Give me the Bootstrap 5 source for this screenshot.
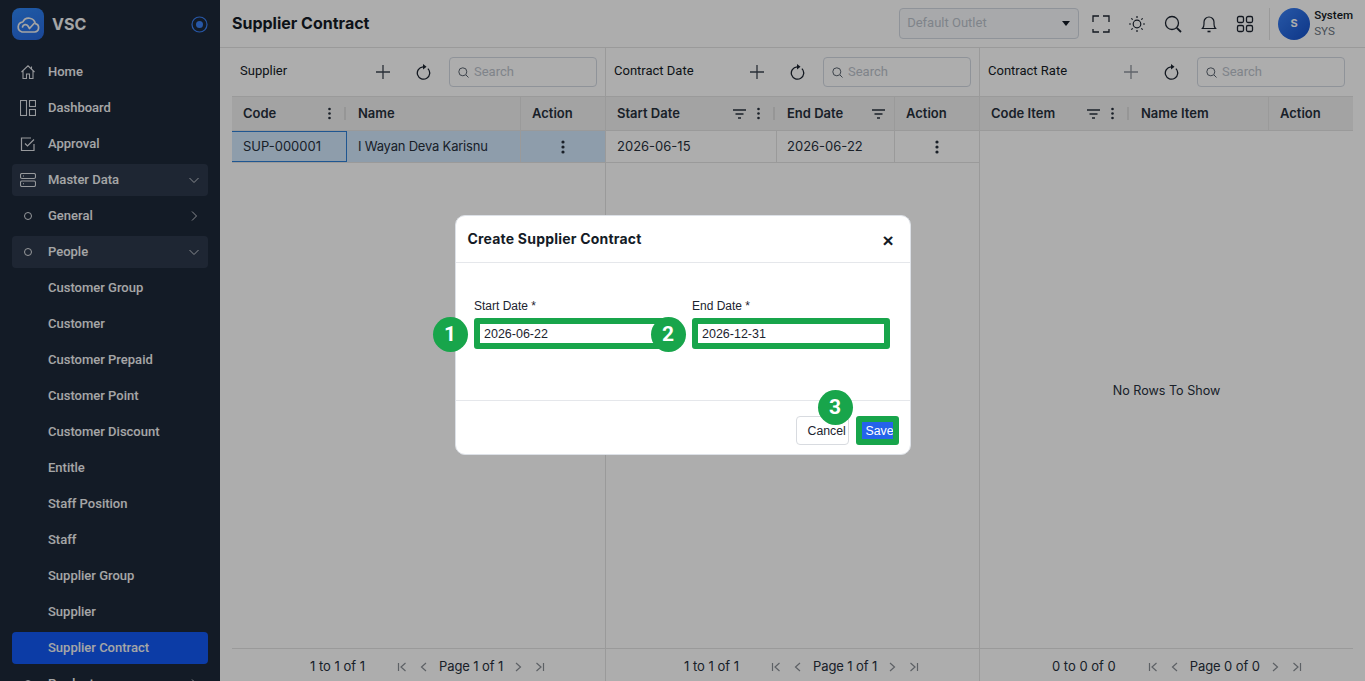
<!DOCTYPE html>
<html lang="en">
<head>
    <meta charset="UTF-8">
    <title>Supplier Contract</title>
    <link href="https://cdn.jsdelivr.net/npm/bootstrap@5.3.3/dist/css/bootstrap.min.css" rel="stylesheet">
    <style>
        html, body { height: 100%; }
        body { font-family: Inter, "Liberation Sans", sans-serif; font-size: 13px; color: #1c2430; overflow: hidden; background: #fff; }
        .app-shell { height: 681px; }

        .side-bar { width: 220px; flex: none; background: #1d2839; color: #f4f5f6; overflow: hidden; font-family: Roboto, sans-serif; }
        .brand-row { height: 48px; padding: 8px 12px; gap: 8px; }
        .brand-logo { width: 32px; height: 32px; border-radius: 8px; background: linear-gradient(160deg, #2f86f5, #2768de); }
        .brand-name { font-family: Inter, sans-serif; font-weight: 700; font-size: 16px; color: #f4f5f6; }
        .side-nav { padding: 8px 12px 0; gap: 4px; flex-wrap: nowrap; }
        .side-link { height: 32px; flex: none; border-radius: 4px; padding: 0 8px; color: #f4f5f6; font-size: 13px; font-weight: 500; display: flex; align-items: center; gap: 12px; }
        .side-link:hover { color: #f4f5f6; }
        .side-link.is-open { background: #2d394c; }
        .side-link.is-current { background: #1259f5; }
        .side-icon { width: 16px; flex: none; display: flex; justify-content: center; }
        .side-sub { padding-left: 36px; }
        .side-dot { width: 8px; height: 8px; border: 1px solid #dfe2e6; border-radius: 50%; }
        .side-caret { margin-left: auto; }

        .top-bar { height: 48px; flex: none; border-bottom: 1px solid #e4e4e4; padding: 0 12px; }
        .page-title { font-size: 16px; font-weight: 700; color: #141b26; margin: 0; }
        .outlet-select { width: 180px; height: 31px; font-family: Roboto, sans-serif; font-size: 13px; padding: 0 8px 2px 7px; border: 1px solid #d3d9e2; border-radius: 4px; color: #bcc3cc; background-image: url("data:image/svg+xml,%3Csvg xmlns='http://www.w3.org/2000/svg' viewBox='0 0 8 5'%3E%3Cpath d='M0 0h8L4 5z' fill='%23141b26'/%3E%3C/svg%3E"); background-size: 8px 5px; background-position: right 8px center; }
        .outlet-select:disabled { background-color: #f8fafc; }
        .top-tool { width: 36px; display: flex; justify-content: center; }
        .user-box { border-left: 1px solid #e4e4e4; margin-left: 6px; padding-left: 8px; height: 32px; gap: 4px; }
        .user-face { width: 32px; height: 32px; border-radius: 50%; background: linear-gradient(135deg, #3b82f6, #1450c8); color: #fff; font-size: 11px; font-weight: 700; }
        .user-text { margin-top: -1px; }
        .user-name { font-family: Roboto, sans-serif; font-size: 11.6px; font-weight: 500; line-height: 16px; color: #141b26; }
        .user-code { font-family: Roboto, sans-serif; font-size: 11.6px; line-height: 16px; color: #6b7480; }

        .panel-row { padding: 0 12px; min-height: 0; }
        .data-panel { width: 374px; flex: none; border-right: 1px solid #e4e4e4; }
        .data-panel:last-child { border-right: 0; width: 373px; }
        .panel-tools { height: 48px; flex: none; padding: 0 8px; font-family: Roboto, sans-serif; font-size: 13px; font-weight: 400; color: #141b26; }
        .tool-title { width: 122px; flex: none; margin-top: -2px; }
        .tool-btn { width: 41px; flex: none; display: flex; justify-content: center; }
        .search-box { width: 148px; flex: none; height: 30px; margin-left: 5px; border: 1px solid #d3d9e2; border-radius: 4px; padding: 0 8px; gap: 5px; color: #bcc3cc; font-size: 13px; }
        .grid-head { height: 35px; flex: none; background: #f1f1f1; border-top: 1px solid #e4e4e4; border-bottom: 1px solid #e4e4e4; font-weight: 600; font-size: 13px; color: #27303c; }
        .grid-body-row { height: 32px; flex: none; border-bottom: 1px solid #e4e4e4; color: #27303c; font-size: 13px; }
        .grid-cell { padding: 0 11px; display: flex; align-items: center; height: 100%; flex: none; border-left: 1px solid #e4e4e4; }
        .grid-cell:first-child { border-left: 0; }
        .grid-body-row .grid-cell + .grid-cell:not(.head-plain) { padding-left: 10px; }
        .head-plain { border-left: 0; }
        .row-picked { background: #d1e7fc; }
        .cell-picked { border: 1px solid #2f7fd6; }
        .name-text { letter-spacing: -.2px; }
        .cell-tail { margin-left: auto; display: flex; align-items: center; gap: 11px; }
        .tail-end { margin-right: -2px; }
        .resize-tick { width: 2px; height: 13px; background: #dddddd; margin-left: 2px; margin-right: -10px; }
        .grid-empty { color: #27303c; font-size: 12.6px; font-weight: 400; padding-top: 3px; }
        .panel-foot { height: 33px; flex: none; border-top: 1px solid #e4e4e4; padding: 3px 0 0 78px; font-size: 13px; color: #27303c; }
        .panel-foot-short { padding-left: 72px; }
        .foot-count { margin-right: 26px; }
        .foot-page { margin: 0 4px; letter-spacing: -.1px; }
        .foot-btn { width: 22px; display: flex; justify-content: center; }

        .dim-layer { position: absolute; inset: 0; background: rgba(0, 0, 0, .32); padding-top: 215px; }
        .dialog-box { width: 456px; height: 240px; border-radius: 10px; border: 1px solid #dde1e7; background: #fff; font-family: "Liberation Sans", sans-serif; color: #1c2430; }
        .dialog-head { height: 47px; padding: 0 13px 0 12px; border-bottom: 1px solid #e5e7eb; }
        .dialog-title { font-family: Inter, sans-serif; font-size: 14px; font-weight: 700; color: #141b26; margin: 0; letter-spacing: .2px; }
        .dialog-close { font-size: 19px; line-height: 1; font-weight: 700; color: #141b26; margin-right: 3px; margin-top: 2px; }
        .dialog-body { height: 137px; padding: 35px 20px 0 18.5px; }
        .field-grid { display: grid; grid-template-columns: 198px 198px; gap: 20px; }
        .field-label { font-size: 12px; line-height: 16px; margin-bottom: 4px; display: block; }
        .field-input { height: 31px; border: 6px solid #18a54b; border-radius: 3px; padding: 0 4px; font-size: 12.5px; color: #1c2430; font-family: "Liberation Sans", sans-serif; }
        .dialog-foot { height: 54px; border-top: 1px solid #e5e7eb; padding: 15px 11px 0 0; gap: 7px; align-items: flex-start; justify-content: flex-end; display: flex; }
        .btn-dismiss { width: 53px; height: 29px; padding: 1px 0 0 11px; border: 1px solid #d8dbe0; border-radius: 4px; background: #fff; font-size: 12.3px; color: #1c2430; text-align: left; white-space: nowrap; }
        .btn-keep { width: 43px; height: 29px; padding: 0 0 0 4px; border: 6px solid #18a54b; border-radius: 3px; background: #2563eb; color: #fff; font-size: 12.3px; line-height: 16px; overflow: hidden; text-align: left; white-space: nowrap; }
        .step-mark { position: absolute; width: 35px; height: 35px; border-radius: 50%; background: #18a54b; color: #fff; font-family: Roboto, sans-serif; font-weight: 700; font-size: 21px; display: flex; align-items: center; justify-content: center; }
        .step-a { left: -23px; top: 101px; }
        .step-b { left: 195px; top: 101px; }
        .step-c { left: 362px; top: 174px; }
    </style>
</head>
<body>
<div class="app-shell d-flex">
    <aside class="side-bar d-flex flex-column">
        <div class="brand-row d-flex align-items-center">
            <span class="brand-logo d-flex align-items-center justify-content-center">
                <svg width="24" height="17" viewBox="0 0 24 17" fill="none" stroke="#f2f2f2" stroke-width="1.700" stroke-linecap="round" stroke-linejoin="round"><path d="M6 16h12.500a4.200 4.200 0 0 0 .8-8.300A6.600 6.600 0 0 0 6.800 6 5.100 5.100 0 0 0 6 16z"/><path d="M6.500 11a3 3 0 0 1 5.500-1l1.500 2.500L18 7.500"/></svg>
            </span>
            <span class="brand-name">VSC</span>
            <svg class="ms-auto" width="17" height="17" viewBox="0 0 17 17"><circle cx="8.500" cy="8.500" r="7.500" fill="none" stroke="#3b82f6" stroke-width="1.200"/><circle cx="8.500" cy="8.500" r="3.500" fill="#3b82f6"/></svg>
        </div>
        <nav class="nav flex-column side-nav">
            <a class="nav-link side-link" href="#"><span class="side-icon"><svg width="16" height="16" viewBox="0 0 16 16" fill="none" stroke="#dfe2e6" stroke-width="1.100"><path d="M1.500 8 8 1.800 14.500 8M3 6.700V14.500h3.500V10h3v4.500H13V6.700M11.500 2.500v2.800"/></svg></span>Home</a>
            <a class="nav-link side-link" href="#"><span class="side-icon"><svg width="16" height="16" viewBox="0 0 16 16" fill="none" stroke="#dfe2e6" stroke-width="1.100"><rect x=".5" y=".5" width="6" height="15"/><rect x="9.500" y=".5" width="6" height="6"/><rect x="9.500" y="9.500" width="6" height="6"/></svg></span>Dashboard</a>
            <a class="nav-link side-link" href="#"><span class="side-icon"><svg width="16" height="16" viewBox="0 0 16 16" fill="none" stroke="#dfe2e6" stroke-width="1.200"><path d="M14 8v6.500H1.500V2H11"/><path d="m5 7.500 2.500 2.500L14 3.500"/></svg></span>Approval</a>
            <a class="nav-link side-link is-open" href="#"><span class="side-icon"><svg width="16" height="14" viewBox="0 0 16 14" fill="none" stroke="#dfe2e6" stroke-width="1.100"><rect x=".5" y=".5" width="15" height="5" rx="1.500"/><rect x=".5" y="8" width="15" height="5.500" rx="1.500"/><path d="M3 3h1M3 10.800h1"/></svg></span>Master Data<svg class="side-caret" width="12" height="12" viewBox="0 0 12 12" fill="none" stroke="#c8ccd2"><path d="m1.500 4 4.500 4.500L10.500 4"/></svg></a>
            <a class="nav-link side-link" href="#"><span class="side-icon"><span class="side-dot"></span></span>General<svg class="side-caret" width="12" height="12" viewBox="0 0 12 12" fill="none" stroke="#c8ccd2"><path d="m4 1.500 4.500 4.500L4 10.500"/></svg></a>
            <a class="nav-link side-link is-open" href="#"><span class="side-icon"><span class="side-dot"></span></span>People<svg class="side-caret" width="12" height="12" viewBox="0 0 12 12" fill="none" stroke="#c8ccd2"><path d="m1.500 4 4.500 4.500L10.500 4"/></svg></a>
            <a class="nav-link side-link side-sub" href="#">Customer Group</a>
            <a class="nav-link side-link side-sub" href="#">Customer</a>
            <a class="nav-link side-link side-sub" href="#">Customer Prepaid</a>
            <a class="nav-link side-link side-sub" href="#">Customer Point</a>
            <a class="nav-link side-link side-sub" href="#">Customer Discount</a>
            <a class="nav-link side-link side-sub" href="#">Entitle</a>
            <a class="nav-link side-link side-sub" href="#">Staff Position</a>
            <a class="nav-link side-link side-sub" href="#">Staff</a>
            <a class="nav-link side-link side-sub" href="#">Supplier Group</a>
            <a class="nav-link side-link side-sub" href="#">Supplier</a>
            <a class="nav-link side-link side-sub is-current" href="#">Supplier Contract</a>
            <a class="nav-link side-link" href="#"><span class="side-icon"><span class="side-dot"></span></span>Product<svg class="side-caret" width="12" height="12" viewBox="0 0 12 12" fill="none" stroke="#c8ccd2"><path d="m4 1.500 4.500 4.500L4 10.500"/></svg></a>
        </nav>
    </aside>

    <main class="flex-grow-1 d-flex flex-column" style="min-width:0">
        <header class="top-bar d-flex align-items-center">
            <h1 class="page-title">Supplier Contract</h1>
            <select class="form-select outlet-select ms-auto" disabled><option>Default Outlet</option></select>
            <span class="top-tool ms-1"><svg width="18" height="18" viewBox="0 0 18 18" fill="none" stroke="#1c2430" stroke-width="1.300"><path d="M1 7V1h6M11 1h6v6M1 14v3h6M17 14v3h-6"/></svg></span>
            <span class="top-tool"><svg width="18" height="18" viewBox="0 0 18 18" fill="none" stroke="#1c2430" stroke-width="1.200"><circle cx="9" cy="9" r="3.800"/><path d="M9 1v2M9 15v2M1 9h2M15 9h2M3.300 3.300l1.400 1.400M13.300 13.300l1.400 1.400M3.300 14.700l1.400-1.400M13.300 4.700l1.400-1.400"/></svg></span>
            <span class="top-tool"><svg width="18" height="18" viewBox="0 0 18 18" fill="none" stroke="#1c2430" stroke-width="1.300"><circle cx="8" cy="8" r="6.500"/><path d="m12.800 12.800 4.200 4.200" stroke-width="1.800"/></svg></span>
            <span class="top-tool"><svg width="16" height="18" viewBox="0 0 16 18" fill="none" stroke="#1c2430" stroke-width="1.200"><path d="M1.500 13.500c1-1 1.500-2 1.500-4.500V7a5 5 0 0 1 10 0v2c0 2.500.5 3.500 1.500 4.500z"/><path d="M6.500 16.500h3" stroke-width="1.600"/></svg></span>
            <span class="top-tool"><svg width="18" height="18" viewBox="0 0 18 18" fill="none" stroke="#1c2430" stroke-width="1.300"><rect x="1.500" y="1.500" width="6" height="6" rx="1.500"/><rect x="10.500" y="1.500" width="6" height="6" rx="1.500"/><rect x="1.500" y="10.500" width="6" height="6" rx="1.500"/><rect x="10.500" y="10.500" width="6" height="6" rx="1.500"/></svg></span>
            <div class="user-box d-flex align-items-center">
                <span class="user-face d-flex align-items-center justify-content-center">S</span>
                <div class="user-text"><div class="user-name">System</div><div class="user-code">SYS</div></div>
            </div>
        </header>

        <div class="panel-row d-flex flex-grow-1">
            <section class="data-panel d-flex flex-column">
                <div class="panel-tools d-flex align-items-center">
                    <span class="tool-title">Supplier</span>
                    <span class="tool-btn"><svg width="14" height="14" viewBox="0 0 14 14" stroke="#3d4652" stroke-width="1.300"><path d="M7 0v14M0 7h14"/></svg></span>
                    <span class="tool-btn"><svg width="15" height="17" viewBox="0 0 15 17" fill="none" stroke="#1c2430" stroke-width="1.300"><path d="M11.900 4.600A6.200 6.200 0 1 1 7 2.800"/><path d="M7 0l3.500 2.800L7 5.500z" fill="#1c2430" stroke="none"/></svg></span>
                    <div class="search-box d-flex align-items-center"><svg width="11" height="11" viewBox="0 0 11 11" fill="none" stroke="#59626e"><circle cx="4.800" cy="4.800" r="4"/><path d="m8 8 2.500 2.500"/></svg>Search</div>
                </div>
                <div class="grid-head d-flex align-items-center">
                    <div class="grid-cell head-plain" style="width:115px">Code<span class="cell-tail"><svg width="3" height="13" viewBox="0 0 3 13" fill="#27303c"><circle cx="1.500" cy="2" r="1.300"/><circle cx="1.500" cy="6.500" r="1.300"/><circle cx="1.500" cy="11" r="1.300"/></svg><span class="resize-tick"></span></span></div>
                    <div class="grid-cell head-plain" style="width:173px">Name</div>
                    <div class="grid-cell" style="width:85px">Action</div>
                </div>
                <div class="grid-body-row row-picked d-flex align-items-center">
                    <div class="grid-cell cell-picked" style="width:115px">SUP-000001</div>
                    <div class="grid-cell head-plain name-text" style="width:173px">I Wayan Deva Karisnu</div>
                    <div class="grid-cell justify-content-center" style="width:85px"><svg width="4" height="14" viewBox="0 0 4 14" fill="#27303c"><circle cx="2" cy="2" r="1.600"/><circle cx="2" cy="7" r="1.600"/><circle cx="2" cy="12" r="1.600"/></svg></div>
                </div>
                <div class="flex-grow-1"></div>
                <div class="panel-foot d-flex align-items-center">
                    <span class="foot-count">1 to 1 of 1</span>
                    <span class="foot-btn"><svg width="10" height="10" viewBox="0 0 10 10" fill="none" stroke="#8a8f96" stroke-width="1.200"><path d="M1.500 1v8M8.500 1 4 5l4.500 4"/></svg></span>
                    <span class="foot-btn"><svg width="10" height="10" viewBox="0 0 10 10" fill="none" stroke="#8a8f96" stroke-width="1.200"><path d="M7 1 2.500 5 7 9"/></svg></span>
                    <span class="foot-page">Page 1 of 1</span>
                    <span class="foot-btn"><svg width="10" height="10" viewBox="0 0 10 10" fill="none" stroke="#8a8f96" stroke-width="1.200"><path d="m3 1 4.500 4L3 9"/></svg></span>
                    <span class="foot-btn"><svg width="10" height="10" viewBox="0 0 10 10" fill="none" stroke="#8a8f96" stroke-width="1.200"><path d="M8.500 1v8M1.500 1 6 5 1.500 9"/></svg></span>
                </div>
            </section>

            <section class="data-panel d-flex flex-column">
                <div class="panel-tools d-flex align-items-center">
                    <span class="tool-title">Contract Date</span>
                    <span class="tool-btn"><svg width="14" height="14" viewBox="0 0 14 14" stroke="#3d4652" stroke-width="1.300"><path d="M7 0v14M0 7h14"/></svg></span>
                    <span class="tool-btn"><svg width="15" height="17" viewBox="0 0 15 17" fill="none" stroke="#1c2430" stroke-width="1.300"><path d="M11.900 4.600A6.200 6.200 0 1 1 7 2.800"/><path d="M7 0l3.500 2.800L7 5.500z" fill="#1c2430" stroke="none"/></svg></span>
                    <div class="search-box d-flex align-items-center"><svg width="11" height="11" viewBox="0 0 11 11" fill="none" stroke="#59626e"><circle cx="4.800" cy="4.800" r="4"/><path d="m8 8 2.500 2.500"/></svg>Search</div>
                </div>
                <div class="grid-head d-flex align-items-center">
                    <div class="grid-cell head-plain" style="width:170px">Start Date<span class="cell-tail"><svg width="13" height="10" viewBox="0 0 13 10" stroke="#27303c" stroke-width="1.400"><path d="M0 1h13M2.500 5h8M5 9h3"/></svg><svg width="3" height="13" viewBox="0 0 3 13" fill="#27303c"><circle cx="1.500" cy="2" r="1.300"/><circle cx="1.500" cy="6.500" r="1.300"/><circle cx="1.500" cy="11" r="1.300"/></svg><span class="resize-tick"></span></span></div>
                    <div class="grid-cell head-plain" style="width:118px">End Date<span class="cell-tail tail-end"><svg width="13" height="10" viewBox="0 0 13 10" stroke="#27303c" stroke-width="1.400"><path d="M0 1h13M2.500 5h8M5 9h3"/></svg></span></div>
                    <div class="grid-cell" style="width:85px">Action</div>
                </div>
                <div class="grid-body-row d-flex align-items-center">
                    <div class="grid-cell" style="width:170px">2026-06-15</div>
                    <div class="grid-cell" style="width:118px">2026-06-22</div>
                    <div class="grid-cell justify-content-center" style="width:85px"><svg width="4" height="14" viewBox="0 0 4 14" fill="#27303c"><circle cx="2" cy="2" r="1.600"/><circle cx="2" cy="7" r="1.600"/><circle cx="2" cy="12" r="1.600"/></svg></div>
                </div>
                <div class="flex-grow-1"></div>
                <div class="panel-foot d-flex align-items-center">
                    <span class="foot-count">1 to 1 of 1</span>
                    <span class="foot-btn"><svg width="10" height="10" viewBox="0 0 10 10" fill="none" stroke="#8a8f96" stroke-width="1.200"><path d="M1.500 1v8M8.500 1 4 5l4.500 4"/></svg></span>
                    <span class="foot-btn"><svg width="10" height="10" viewBox="0 0 10 10" fill="none" stroke="#8a8f96" stroke-width="1.200"><path d="M7 1 2.500 5 7 9"/></svg></span>
                    <span class="foot-page">Page 1 of 1</span>
                    <span class="foot-btn"><svg width="10" height="10" viewBox="0 0 10 10" fill="none" stroke="#8a8f96" stroke-width="1.200"><path d="m3 1 4.500 4L3 9"/></svg></span>
                    <span class="foot-btn"><svg width="10" height="10" viewBox="0 0 10 10" fill="none" stroke="#8a8f96" stroke-width="1.200"><path d="M8.500 1v8M1.500 1 6 5 1.500 9"/></svg></span>
                </div>
            </section>

            <section class="data-panel d-flex flex-column">
                <div class="panel-tools d-flex align-items-center">
                    <span class="tool-title">Contract Rate</span>
                    <span class="tool-btn"><svg width="14" height="14" viewBox="0 0 14 14" stroke="#8f959d" stroke-width="1.300"><path d="M7 0v14M0 7h14"/></svg></span>
                    <span class="tool-btn"><svg width="15" height="17" viewBox="0 0 15 17" fill="none" stroke="#1c2430" stroke-width="1.300"><path d="M11.900 4.600A6.200 6.200 0 1 1 7 2.800"/><path d="M7 0l3.500 2.800L7 5.500z" fill="#1c2430" stroke="none"/></svg></span>
                    <div class="search-box d-flex align-items-center"><svg width="11" height="11" viewBox="0 0 11 11" fill="none" stroke="#59626e"><circle cx="4.800" cy="4.800" r="4"/><path d="m8 8 2.500 2.500"/></svg>Search</div>
                </div>
                <div class="grid-head d-flex align-items-center">
                    <div class="grid-cell head-plain" style="width:150px">Code Item<span class="cell-tail"><svg width="13" height="10" viewBox="0 0 13 10" stroke="#27303c" stroke-width="1.400"><path d="M0 1h13M2.500 5h8M5 9h3"/></svg><svg width="3" height="13" viewBox="0 0 3 13" fill="#27303c"><circle cx="1.500" cy="2" r="1.300"/><circle cx="1.500" cy="6.500" r="1.300"/><circle cx="1.500" cy="11" r="1.300"/></svg><span class="resize-tick"></span></span></div>
                    <div class="grid-cell head-plain" style="width:138px">Name Item</div>
                    <div class="grid-cell" style="width:85px">Action</div>
                </div>
                <div class="grid-empty flex-grow-1 d-flex align-items-center justify-content-center">No Rows To Show</div>
                <div class="panel-foot panel-foot-short d-flex align-items-center">
                    <span class="foot-count">0 to 0 of 0</span>
                    <span class="foot-btn"><svg width="10" height="10" viewBox="0 0 10 10" fill="none" stroke="#8a8f96" stroke-width="1.200"><path d="M1.500 1v8M8.500 1 4 5l4.500 4"/></svg></span>
                    <span class="foot-btn"><svg width="10" height="10" viewBox="0 0 10 10" fill="none" stroke="#8a8f96" stroke-width="1.200"><path d="M7 1 2.500 5 7 9"/></svg></span>
                    <span class="foot-page">Page 0 of 0</span>
                    <span class="foot-btn"><svg width="10" height="10" viewBox="0 0 10 10" fill="none" stroke="#8a8f96" stroke-width="1.200"><path d="m3 1 4.500 4L3 9"/></svg></span>
                    <span class="foot-btn"><svg width="10" height="10" viewBox="0 0 10 10" fill="none" stroke="#8a8f96" stroke-width="1.200"><path d="M8.500 1v8M1.500 1 6 5 1.500 9"/></svg></span>
                </div>
            </section>
        </div>
    </main>
</div>

<div class="dim-layer d-flex justify-content-center align-items-start">
    <div class="modal-content dialog-box position-relative">
        <div class="dialog-head d-flex align-items-center justify-content-between">
            <h5 class="dialog-title">Create Supplier Contract</h5>
            <span class="dialog-close">×</span>
        </div>
        <div class="dialog-body">
            <div class="field-grid">
                <div><label class="field-label">Start Date *</label><input class="form-control field-input" value="2026-06-22"></div>
                <div><label class="field-label">End Date *</label><input class="form-control field-input" value="2026-12-31"></div>
            </div>
        </div>
        <div class="dialog-foot">
            <button class="btn-dismiss">Cancel</button>
            <button class="btn-keep">Save</button>
        </div>
        <span class="step-mark step-a">1</span>
        <span class="step-mark step-b">2</span>
        <span class="step-mark step-c">3</span>
    </div>
</div>

<script src="https://cdn.jsdelivr.net/npm/bootstrap@5.3.3/dist/js/bootstrap.bundle.min.js"></script>
</body>
</html>
